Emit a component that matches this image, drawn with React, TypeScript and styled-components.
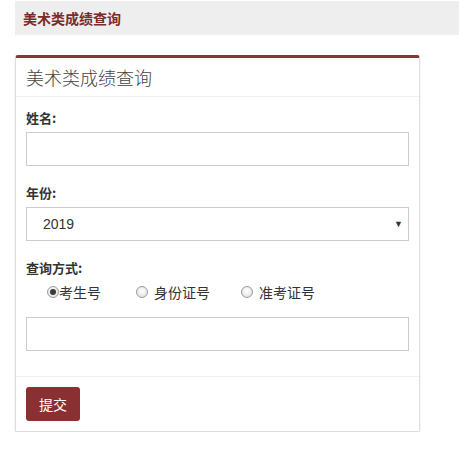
import React, { useState } from "react";
import styled, { createGlobalStyle } from "styled-components";

const Global = createGlobalStyle`
  html, body { margin: 0; padding: 0; background: #fff; }
  body { font-family: "Noto Sans CJK SC", "Liberation Sans", sans-serif; color: #333; }
  * { box-sizing: border-box; }
`;

const Page = styled.div`
  padding: 1px 0 0 15px;
`;

const TopBar = styled.div`
  height: 34px;
  background: #eeeeee;
  display: flex;
  align-items: center;
  padding-left: 8px;
  font-size: 14px;
  font-weight: bold;
  color: #7b2b2b;
`;

const Panel = styled.div`
  width: 405px;
  margin-top: 20px;
  border: 1px solid #dddddd;
  border-top: 3px solid #8a3333;
  border-radius: 3px 3px 2px 2px;
  box-shadow: 0 1px 2px rgba(0, 0, 0, 0.12);
  background: #fff;
`;

const PanelHeading = styled.div`
  height: 39px;
  padding: 0 10px;
  display: flex;
  align-items: center;
  border-bottom: 1px solid #f0f0f0;
  font-size: 18px;
  font-weight: 300;
  color: #444;
`;

const PanelBody = styled.div`
  padding: 12px 10px 10px;
`;

const Field = styled.div`
  margin-bottom: 18px;
`;

const Label = styled.div`
  font-size: 13px;
  font-weight: bold;
  line-height: 18px;
  margin-bottom: 5px;
  color: #333;
`;

const TextInput = styled.input`
  display: block;
  width: 383px;
  height: 34px;
  border: 1px solid #cccccc;
  border-radius: 0;
  outline: none;
  padding: 0 12px;
  font-size: 14px;
`;

const SelectBox = styled.div`
  width: 383px;
  height: 34px;
  border: 1px solid #cccccc;
  display: flex;
  align-items: center;
  justify-content: space-between;
  padding: 0 5px 0 16px;
  font-family: "Liberation Sans", Arial, sans-serif;
  font-size: 14px;
  color: #333;
`;

const Arrow = styled.span`
  font-size: 9px;
  color: #333;
`;

const RadioRow = styled.div`
  display: flex;
  align-items: center;
  height: 18px;
  padding-left: 21px;
  margin-top: 6px;
  margin-bottom: 16px;
`;

const RadioItem = styled.label<{ $gap: number; $space: number }>`
  display: flex;
  align-items: center;
  gap: ${(p) => p.$gap}px;
  margin-right: ${(p) => p.$space}px;
  font-size: 14px;
  color: #333;
  cursor: pointer;
`;

const RadioDot = styled.span<{ $checked: boolean }>`
  width: 12px;
  height: 12px;
  border-radius: 50%;
  border: 1px solid #9a9a9a;
  background: radial-gradient(circle at 50% 40%, #ffffff 0%, #dcdcdc 100%);
  display: flex;
  align-items: center;
  justify-content: center;
  &::after {
    content: "";
    width: 6px;
    height: 6px;
    border-radius: 50%;
    background: ${(p) => (p.$checked ? "#3a3a3a" : "transparent")};
  }
`;

const PanelFooter = styled.div`
  border-top: 1px solid #f0f0f0;
  padding: 10px;
`;

const Button = styled.button`
  width: 54px;
  height: 34px;
  border: none;
  border-radius: 3px;
  background: #8a2f32;
  color: #fff;
  font-family: "Noto Sans CJK SC", sans-serif;
  font-size: 14px;
  padding: 0;
  cursor: pointer;
`;

const Spacer = styled.div`
  height: 15px;
`;

const options = [
  { label: "考生号", gap: 0, space: 35 },
  { label: "身份证号", gap: 6, space: 31 },
  { label: "准考证号", gap: 6, space: 0 },
];

export default function App() {
  const [mode, setMode] = useState(0);
  return (
    <Page>
      <Global />
      <TopBar>美术类成绩查询</TopBar>
      <Panel>
        <PanelHeading>美术类成绩查询</PanelHeading>
        <PanelBody>
          <Field>
            <Label>姓名:</Label>
            <TextInput />
          </Field>
          <Field>
            <Label>年份:</Label>
            <SelectBox>
              <span>2019</span>
              <Arrow>▼</Arrow>
            </SelectBox>
          </Field>
          <Label>查询方式:</Label>
          <RadioRow>
            {options.map((o, i) => (
              <RadioItem key={o.label} $gap={o.gap} $space={o.space} onClick={() => setMode(i)}>
                <RadioDot $checked={mode === i} />
                {o.label}
              </RadioItem>
            ))}
          </RadioRow>
          <TextInput />
          <Spacer />
        </PanelBody>
        <PanelFooter>
          <Button>提交</Button>
        </PanelFooter>
      </Panel>
    </Page>
  );
}
